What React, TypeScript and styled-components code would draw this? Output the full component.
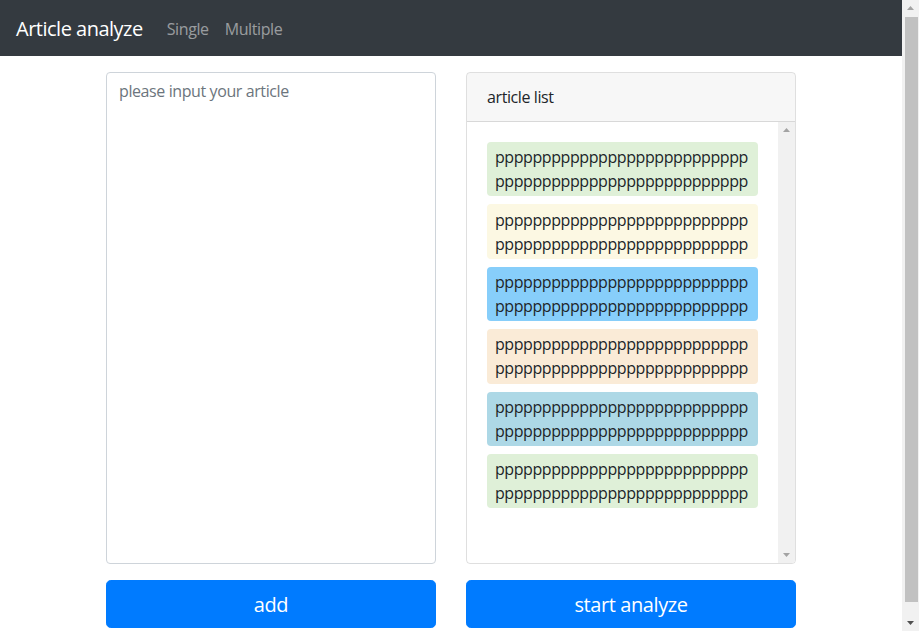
import React from "react";
import styled, { createGlobalStyle } from "styled-components";

const Global = createGlobalStyle`
  html, body { margin: 0; padding: 0; }
  body {
    font-family: "Open Sans", "Noto Sans", "Liberation Sans", sans-serif;
    font-size: 16px;
    line-height: 1.5;
    color: #212529;
    background: #fff;
    padding-right: 17px;
  }
  * { box-sizing: border-box; }
`;

const PageScrollbar = styled.div`
  position: fixed;
  top: 0;
  right: 0;
  width: 17px;
  height: 100vh;
  background: #f1f1f1;
  display: flex;
  flex-direction: column;
  align-items: center;
`;

const ScrollArrow = styled.svg`
  display: block;
  flex: none;
`;

const PageThumb = styled.div`
  width: 13px;
  margin-left: 1px;
  height: 585px;
  background: #c1c1c1;
`;

const Spacer = styled.div`
  flex: 1;
`;

const Navbar = styled.nav`
  display: flex;
  align-items: center;
  height: 56px;
  padding: 9px 16px 7px;
  background: #343a40;
`;

const Brand = styled.a`
  font-size: 20px;
  line-height: 30px;
  padding: 5px 0;
  margin-right: 16px;
  color: #fff;
  letter-spacing: -0.5px;
  text-decoration: none;
`;

const NavLink = styled.a`
  padding: 8px;
  color: rgba(255, 255, 255, 0.5);
  letter-spacing: -0.4px;
  text-decoration: none;
`;

const Container = styled.main`
  width: 720px;
  margin: 16px auto;
  display: grid;
  grid-template-columns: 1fr 1fr;
`;

const Col = styled.div`
  padding: 0 15px;
  display: flex;
  flex-direction: column;
  gap: 16px;
`;

const TextArea = styled.textarea`
  display: block;
  width: 100%;
  height: 492px;
  padding: 6px 12px;
  font: inherit;
  letter-spacing: -0.4px;
  color: #495057;
  border: 1px solid #ced4da;
  border-radius: 4px;
  resize: none;
  outline: none;
  &::placeholder { color: #6c757d; opacity: 1; }
`;

const Card = styled.section`
  height: 492px;
  display: flex;
  flex-direction: column;
  border: 1px solid rgba(0, 0, 0, 0.125);
  border-radius: 4px;
  overflow: hidden;
`;

const CardHeader = styled.div`
  padding: 12px 20px;
  line-height: 24px;
  background: rgba(0, 0, 0, 0.03);
  border-bottom: 1px solid rgba(0, 0, 0, 0.125);
  letter-spacing: -0.4px;
`;

const CardBody = styled.div`
  flex: 1;
  display: flex;
  min-height: 0;
`;

const List = styled.div`
  flex: 1;
  min-width: 0;
  padding: 20px;
  display: flex;
  flex-direction: column;
  gap: 8px;
`;

const ListScrollbar = styled.div`
  width: 17px;
  flex: none;
  background: #f1f1f1;
  display: flex;
  flex-direction: column;
  justify-content: space-between;
  align-items: center;
`;

const Item = styled.div<{ $bg: string }>`
  background: ${(p) => p.$bg};
  border-radius: 4px;
  padding: 3.2px 8px;
  line-height: 24px;
  letter-spacing: -0.42px;
  word-break: break-all;
`;

const Button = styled.button`
  display: block;
  width: 100%;
  height: 48px;
  padding: 1px 0 0;
  border: 1px solid #007bff;
  border-radius: 4.8px;
  background: #007bff;
  color: #fff;
  font: inherit;
  font-size: 20px;
  letter-spacing: -0.4px;
  cursor: pointer;
`;

const Arrow = ({ dir, color, w }: { dir: "up" | "down"; color: string; w: number }) => (
  <ScrollArrow width={w} height={17} viewBox={`0 0 ${w} 17`}>
    {dir === "up" ? (
      <polygon points={`${w / 2 - 3.5},10 ${w / 2 + 3.5},10 ${w / 2},6`} fill={color} />
    ) : (
      <polygon points={`${w / 2 - 3.5},7 ${w / 2 + 3.5},7 ${w / 2},11`} fill={color} />
    )}
  </ScrollArrow>
);

const colors = ["#dff0d8", "#fcf8e3", "#87cefa", "#faebd7", "#add8e6", "#dff0d8"];
const text = "p".repeat(54);

export default function App() {
  return (
    <>
      <Global />
      <Navbar>
        <Brand href="#">Article analyze</Brand>
        <NavLink href="#">Single</NavLink>
        <NavLink href="#">Multiple</NavLink>
      </Navbar>
      <Container>
        <Col>
          <TextArea placeholder="please input your article" />
          <Button>add</Button>
        </Col>
        <Col>
          <Card>
            <CardHeader>article list</CardHeader>
            <CardBody>
              <List>
                {colors.map((c, i) => (
                  <Item key={i} $bg={c}>{text}</Item>
                ))}
              </List>
              <ListScrollbar>
                <Arrow dir="up" color="#a3a3a3" w={17} />
                <Arrow dir="down" color="#a3a3a3" w={17} />
              </ListScrollbar>
            </CardBody>
          </Card>
          <Button>start analyze</Button>
        </Col>
      </Container>
      <PageScrollbar>
        <Arrow dir="up" color="#a3a3a3" w={17} />
        <PageThumb />
        <Spacer />
        <Arrow dir="down" color="#505050" w={17} />
      </PageScrollbar>
    </>
  );
}
